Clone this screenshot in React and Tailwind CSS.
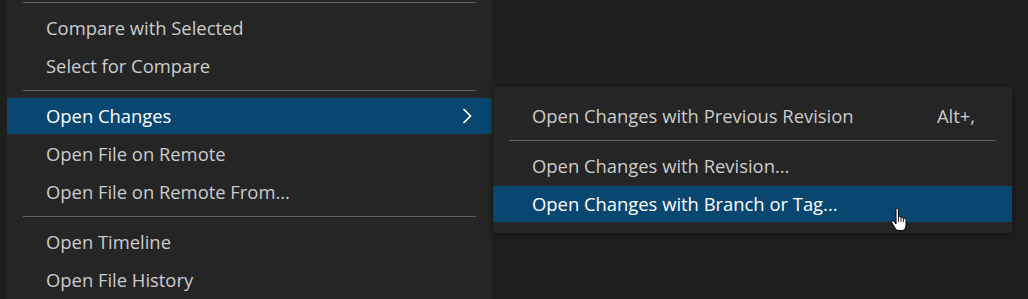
import React from "react";

const mainItems = [
  { type: "sep", first: true },
  { label: "Compare with Selected" },
  { label: "Select for Compare" },
  { type: "sep" },
  { label: "Open Changes", active: true, submenu: true },
  { label: "Open File on Remote" },
  { label: "Open File on Remote From..." },
  { type: "sep" },
  { label: "Open Timeline" },
  { label: "Open File History" },
];

const subItems = [
  { label: "Open Changes with Previous Revision", key: "Alt+," },
  { type: "sep" },
  { label: "Open Changes with Revision..." },
  { label: "Open Changes with Branch or Tag...", active: true },
];

function Chevron() {
  return (
    <svg width="10" height="16" viewBox="0 0 10 16" className="ml-auto mr-[20px]">
      <path d="M1.5 1 L8.5 8 L1.5 15" fill="none" stroke="#ffffff" strokeWidth="1.7" />
    </svg>
  );
}

function Separator({ first }) {
  if (first) {
    return (
      <div className="pt-[2px] pb-[6px] px-4">
        <div className="h-px bg-[#606060]" />
      </div>
    );
  }
  return (
    <div className="pt-[5px] pb-[6px] px-4">
      <div className="h-px bg-[#606060]" />
    </div>
  );
}

function Item({ item, padRight }) {
  return (
    <div className="h-[38px] flex flex-col justify-center">
      <div
        className={
          "h-[36px] flex items-center pl-[39px] whitespace-nowrap " +
          (item.active ? "bg-[#094771] text-white" : "text-[#cccccc]")
        }
      >
        <span>{item.label}</span>
        {item.submenu && <Chevron />}
        {item.key && <span className="ml-auto pr-[37px]">{item.key}</span>}
      </div>
    </div>
  );
}

function Cursor() {
  return (
    <svg
      width="18"
      height="24"
      viewBox="0 0 18 24"
      className="absolute left-[890px] top-[208px]"
    >
      <path
        d="M6 2 C6 1 6.5 0.5 7.25 0.5 C8 0.5 8.5 1 8.5 2 V9.5 C8.5 8.7 9 8.3 9.75 8.3 C10.5 8.3 11 8.7 11 9.5 V10.5 C11 9.7 11.5 9.3 12.25 9.3 C13 9.3 13.5 9.7 13.5 10.5 V11.5 C13.5 10.7 14 10.3 14.75 10.3 C15.5 10.3 16 10.7 16 11.5 V17 C16 20 14.5 22.5 12 22.5 H9 C7 22.5 6 21.5 5 20 L2 15 C1.5 14.2 1.7 13.3 2.4 13 C3.1 12.7 3.8 13 4.3 13.7 L6 16 Z"
        fill="#ffffff"
        stroke="#000000"
        strokeWidth="1"
        strokeLinejoin="round"
      />
      <path d="M8.5 9.5 V14 M11 10.5 V14 M13.5 11.5 V14" stroke="#000000" strokeWidth="0.8" fill="none" />
    </svg>
  );
}

export default function App() {
  return (
    <div
      className="relative flex items-start h-[299px] w-[1028px] overflow-hidden bg-[#1f1f1f] text-[18.4px]"
      style={{ fontFamily: '"Open Sans", "Noto Sans", sans-serif' }}
    >
      <div className="ml-[7px] w-[485px] h-[299px] shrink-0 bg-[#252526] flex flex-col">
        {mainItems.map((it, i) =>
          it.type === "sep" ? <Separator key={i} first={it.first} /> : <Item key={i} item={it} />
        )}
      </div>
      <div className="ml-px mt-[87px] w-[519px] shrink-0 bg-[#252526] py-[10px] shadow-[0_2px_8px_rgba(0,0,0,0.4)]">
        {subItems.map((it, i) =>
          it.type === "sep" ? <Separator key={i} /> : <Item key={i} item={it} />
        )}
      </div>
      <Cursor />
    </div>
  );
}
